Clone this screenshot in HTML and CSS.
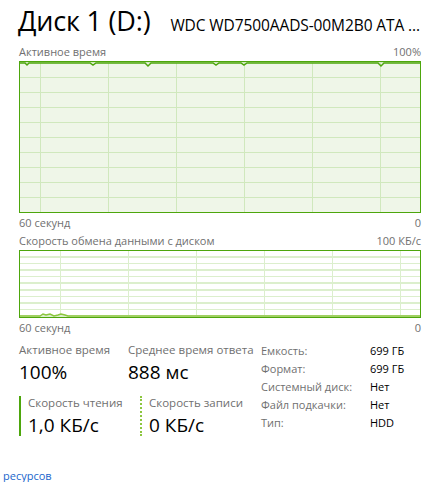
FILE: index.html
```html
<!DOCTYPE html>
<html lang="ru">
<head>
  <meta charset="UTF-8">
  <title>Диск 1 (D:)</title>
  <link rel="stylesheet" href="styles.css">
</head>
<body>
  <div class="panel">
    <div class="header">
      <h1>Диск 1 (D:)</h1>
      <span class="model">WDC WD7500AADS-00M2B0 ATA ...</span>
    </div>

    <div class="caption">
      <span>Активное время</span>
      <span>100%</span>
    </div>
    <div class="chart chart-active">
      <svg class="plot" viewBox="0 0 400 150" preserveAspectRatio="none">
        <polyline fill="none" stroke="#4da60c" stroke-width="1.5"
          points="0,1 5,1 7,3 9,1 70,1 73,3 76,1 125,1 128,4 131,1 193,1 196,3 199,1 221,1 224,3 227,1 358,1 361,4 364,1 400,1"/>
      </svg>
    </div>
    <div class="caption axis">
      <span>60 секунд</span>
      <span>0</span>
    </div>

    <div class="caption">
      <span>Скорость обмена данными с диском</span>
      <span>100 КБ/с</span>
    </div>
    <div class="chart chart-rate">
      <svg class="plot" viewBox="0 0 400 66" preserveAspectRatio="none">
        <polyline fill="none" stroke="#8cc63f" stroke-width="1.5"
          points="0,65 20,65 23,63 26,64 30,63 34,65 38,64 41,63 45,64 48,65 400,65"/>
      </svg>
    </div>
    <div class="caption axis">
      <span>60 секунд</span>
      <span>0</span>
    </div>

    <div class="stats">
      <div class="stats-left">
        <div class="stat-row">
          <div class="stat">
            <div class="stat-label">Активное время</div>
            <div class="stat-value">100%</div>
          </div>
          <div class="stat">
            <div class="stat-label">Среднее время ответа</div>
            <div class="stat-value">888 мс</div>
          </div>
        </div>
        <div class="stat-row">
          <div class="stat marked solid">
            <div class="stat-label">Скорость чтения</div>
            <div class="stat-value">1,0 КБ/с</div>
          </div>
          <div class="stat marked dotted">
            <div class="stat-label">Скорость записи</div>
            <div class="stat-value">0 КБ/с</div>
          </div>
        </div>
      </div>
      <div class="props">
        <span class="prop-name">Емкость:</span><span>699 ГБ</span>
        <span class="prop-name">Формат:</span><span>699 ГБ</span>
        <span class="prop-name">Системный диск:</span><span>Нет</span>
        <span class="prop-name">Файл подкачки:</span><span>Нет</span>
        <span class="prop-name">Тип:</span><span>HDD</span>
      </div>
    </div>
  </div>
  <a class="monitor-link" href="#">ресурсов</a>
</body>
</html>
```

FILE: styles.css
```css
body {
  margin: 0;
  background: #fff;
  font-family: "Open Sans", "Noto Sans", sans-serif;
  color: #000;
  width: 440px;
  height: 482px;
  overflow: hidden;
  position: relative;
}

.panel {
  padding: 0 19px 0 19px;
  width: 402px;
}

.header {
  display: flex;
  align-items: baseline;
  height: 42px;
  white-space: nowrap;
}

h1 {
  margin: 0;
  font-weight: 400;
  font-size: 27px;
  line-height: 42px;
  letter-spacing: -0.2px;
  margin-left: -1px;
}

.model {
  margin-left: 20px;
  font-size: 15.5px;
  letter-spacing: -0.1px;
}

.caption {
  display: flex;
  justify-content: space-between;
  font-size: 11px;
  color: #707070;
  height: 19px;
  line-height: 19px;
  white-space: nowrap;
}

.axis {
  height: 18px;
  line-height: 20px;
}

.chart {
  position: relative;
  border: 1.5px solid #4da60c;
}

.chart-active {
  height: 150px;
  background-color: #eff6e8;
  background-image:
    linear-gradient(to right, #d0e8bd 1.5px, transparent 1.5px),
    linear-gradient(to bottom, #d0e8bd 1.5px, transparent 1.5px);
  background-size: 68px 100%, 100% 15px;
  background-position: 20px 0, 0 0;
  background-repeat: repeat-x, repeat-y;
}

.chart-rate {
  height: 66px;
  background-color: #fff;
  background-image:
    linear-gradient(to right, #dcefcd 1.5px, transparent 1.5px),
    repeating-linear-gradient(to bottom, transparent 0, transparent 5.1px, #dcefcd 5.1px, #dcefcd 6.6px);
  background-size: 68px 100%, 100% 100%;
  background-position: 40px 0, 0 0;
  background-repeat: repeat-x, no-repeat;
}

.plot {
  position: absolute;
  left: 0;
  top: 0;
  width: 100%;
  height: 100%;
  display: block;
}

.stats {
  display: flex;
  margin-top: 6px;
}

.stats-left {
  width: 242px;
}

.stat-row {
  display: flex;
  margin-bottom: 10px;
}

.stat {
  width: 109px;
}

.stat-label {
  font-size: 11.5px;
  color: #707070;
  line-height: 16px;
  white-space: nowrap;
}

.stat-value {
  font-size: 19px;
  line-height: 28px;
  white-space: nowrap;
}

.marked {
  padding-left: 7px;
  height: 40px;
  border-left: 2px solid #4da60c;
}

.marked .stat-label {
  line-height: 14px;
}

.marked .stat-value {
  line-height: 30px;
}

.stat.solid {
  width: 112px;
}

.stat.dotted {
  border-left: 2px dotted #8cc63f;
}

.props {
  display: grid;
  grid-template-columns: 109px auto;
  grid-auto-rows: 18px;
  font-size: 11px;
  line-height: 18px;
  white-space: nowrap;
}

.prop-name {
  color: #707070;
}

.monitor-link {
  position: absolute;
  left: 3px;
  top: 468px;
  font-size: 11px;
  color: #1a66cc;
  text-decoration: none;
}
```
